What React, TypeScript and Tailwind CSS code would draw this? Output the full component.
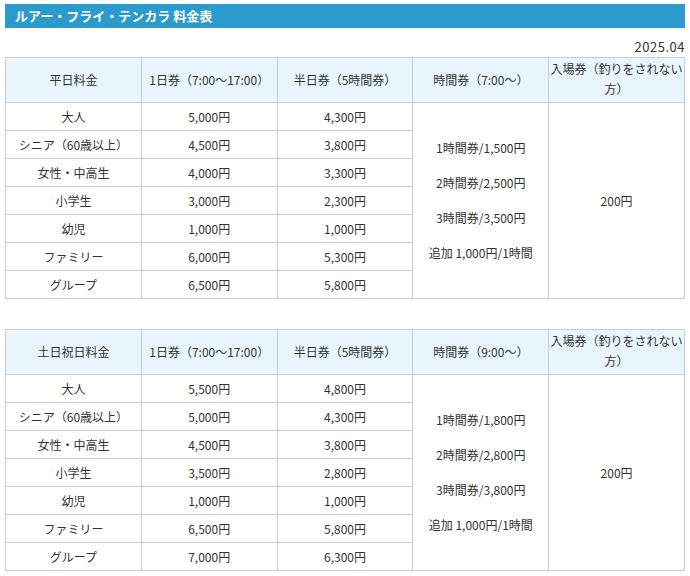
const rows1 = [["大人","5,000円","4,300円"],["シニア（60歳以上）","4,500円","3,800円"],["女性・中高生","4,000円","3,300円"],["小学生","3,000円","2,300円"],["幼児","1,000円","1,000円"],["ファミリー","6,000円","5,300円"],["グループ","6,500円","5,800円"]];
const rows2 = [["大人","5,500円","4,800円"],["シニア（60歳以上）","5,000円","4,300円"],["女性・中高生","4,500円","3,800円"],["小学生","3,500円","2,800円"],["幼児","1,000円","1,000円"],["ファミリー","6,500円","5,800円"],["グループ","7,000円","6,300円"]];

function PriceTable({label,time,rows,hours}:{label:string;time:string;rows:string[][];hours:string[]}) {
  const td = "border border-[#cccccc] text-center align-middle";
  return (
    <table className="w-full border-collapse table-fixed text-[12px] text-[#333]">
      <tbody>
        <tr className="bg-[#e9f5fc] h-[45px]">
          <td className={td}>{label}</td>
          <td className={td}>1日券（7:00〜17:00）</td>
          <td className={td}>半日券（5時間券）</td>
          <td className={td}>{time}</td>
          <td className={td + " leading-[20px] pb-[2px]"}>入場券（釣りをされない方）</td>
        </tr>
        {rows.map((r,i)=>(
          <tr key={i} className="h-[28px]">
            <td className={td}>{r[0]}</td>
            <td className={td}>{r[1]}</td>
            <td className={td}>{r[2]}</td>
            {i===0 && <td rowSpan={7} className={td}>
              <div className="flex flex-col gap-[17px]">{hours.map(h=><div key={h}>{h}</div>)}</div>
            </td>}
            {i===0 && <td rowSpan={7} className={td}>200円</td>}
          </tr>
        ))}
      </tbody>
    </table>
  );
}

export default function App() {
  return (
    <div className="w-[690px] px-[5px] pt-[4px] bg-white" style={{fontFamily:'"Noto Sans CJK JP", "Noto Sans", sans-serif'}}>
      <div className="h-[24px] bg-[#2a9bcc] text-white font-bold text-[13px] flex items-center px-[10px]">ルアー・フライ・テンカラ 料金表</div>
      <div className="text-right text-[13px] text-[#333] mt-[9px] h-[20px] leading-[20px] tracking-[0.5px]">2025.04</div>
      <PriceTable label="平日料金" time="時間券（7:00〜）" rows={rows1} hours={["1時間券/1,500円","2時間券/2,500円","3時間券/3,500円","追加 1,000円/1時間"]} />
      <div className="h-[30px]" />
      <PriceTable label="土日祝日料金" time="時間券（9:00〜）" rows={rows2} hours={["1時間券/1,800円","2時間券/2,800円","3時間券/3,800円","追加 1,000円/1時間"]} />
    </div>
  );
}
